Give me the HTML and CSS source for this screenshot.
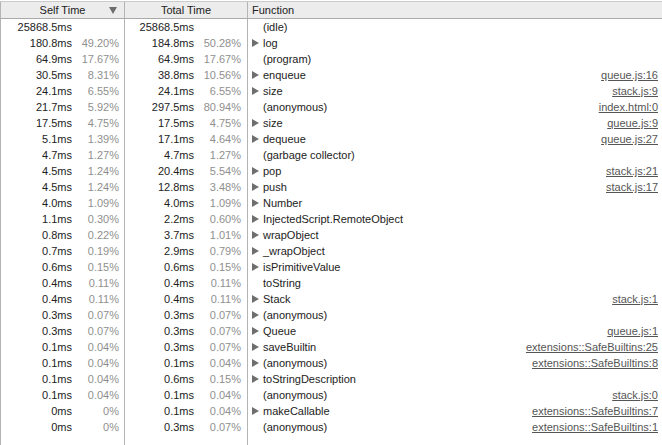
FILE: index.html
```html
<!DOCTYPE html>
<html>
<head>
<meta charset="utf-8">
<link rel="stylesheet" href="styles.css">
</head>
<body>
<div class="grid">
  <div class="row head">
    <div class="cell hself">Self Time<svg class="sort" viewBox="0 0 8 7"><path d="M0 0H8L4 7Z"/></svg></div>
    <div class="cell htotal">Total Time</div>
    <div class="cell hfn">Function</div>
  </div>

  <div class="row"><div class="cell num">25868.5ms<span class="pct"></span></div><div class="cell num tot">25868.5ms<span class="pct"></span></div><div class="cell fn"><span class="tw"></span><span class="name">(idle)</span></div></div>
  <div class="row"><div class="cell num">180.8ms<span class="pct">49.20%</span></div><div class="cell num tot">184.8ms<span class="pct">50.28%</span></div><div class="cell fn"><span class="tw"><svg class="tri" viewBox="0 0 7 8"><path d="M0 0L7 4L0 8Z"/></svg></span><span class="name">log</span></div></div>
  <div class="row"><div class="cell num">64.9ms<span class="pct">17.67%</span></div><div class="cell num tot">64.9ms<span class="pct">17.67%</span></div><div class="cell fn"><span class="tw"></span><span class="name">(program)</span></div></div>
  <div class="row"><div class="cell num">30.5ms<span class="pct">8.31%</span></div><div class="cell num tot">38.8ms<span class="pct">10.56%</span></div><div class="cell fn"><span class="tw"><svg class="tri" viewBox="0 0 7 8"><path d="M0 0L7 4L0 8Z"/></svg></span><span class="name">enqueue</span><a class="src">queue.js:16</a></div></div>
  <div class="row"><div class="cell num">24.1ms<span class="pct">6.55%</span></div><div class="cell num tot">24.1ms<span class="pct">6.55%</span></div><div class="cell fn"><span class="tw"><svg class="tri" viewBox="0 0 7 8"><path d="M0 0L7 4L0 8Z"/></svg></span><span class="name">size</span><a class="src">stack.js:9</a></div></div>
  <div class="row"><div class="cell num">21.7ms<span class="pct">5.92%</span></div><div class="cell num tot">297.5ms<span class="pct">80.94%</span></div><div class="cell fn"><span class="tw"></span><span class="name">(anonymous)</span><a class="src">index.html:0</a></div></div>
  <div class="row"><div class="cell num">17.5ms<span class="pct">4.75%</span></div><div class="cell num tot">17.5ms<span class="pct">4.75%</span></div><div class="cell fn"><span class="tw"><svg class="tri" viewBox="0 0 7 8"><path d="M0 0L7 4L0 8Z"/></svg></span><span class="name">size</span><a class="src">queue.js:9</a></div></div>
  <div class="row"><div class="cell num">5.1ms<span class="pct">1.39%</span></div><div class="cell num tot">17.1ms<span class="pct">4.64%</span></div><div class="cell fn"><span class="tw"><svg class="tri" viewBox="0 0 7 8"><path d="M0 0L7 4L0 8Z"/></svg></span><span class="name">dequeue</span><a class="src">queue.js:27</a></div></div>
  <div class="row"><div class="cell num">4.7ms<span class="pct">1.27%</span></div><div class="cell num tot">4.7ms<span class="pct">1.27%</span></div><div class="cell fn"><span class="tw"></span><span class="name">(garbage collector)</span></div></div>
  <div class="row"><div class="cell num">4.5ms<span class="pct">1.24%</span></div><div class="cell num tot">20.4ms<span class="pct">5.54%</span></div><div class="cell fn"><span class="tw"><svg class="tri" viewBox="0 0 7 8"><path d="M0 0L7 4L0 8Z"/></svg></span><span class="name">pop</span><a class="src">stack.js:21</a></div></div>
  <div class="row"><div class="cell num">4.5ms<span class="pct">1.24%</span></div><div class="cell num tot">12.8ms<span class="pct">3.48%</span></div><div class="cell fn"><span class="tw"><svg class="tri" viewBox="0 0 7 8"><path d="M0 0L7 4L0 8Z"/></svg></span><span class="name">push</span><a class="src">stack.js:17</a></div></div>
  <div class="row"><div class="cell num">4.0ms<span class="pct">1.09%</span></div><div class="cell num tot">4.0ms<span class="pct">1.09%</span></div><div class="cell fn"><span class="tw"><svg class="tri" viewBox="0 0 7 8"><path d="M0 0L7 4L0 8Z"/></svg></span><span class="name">Number</span></div></div>
  <div class="row"><div class="cell num">1.1ms<span class="pct">0.30%</span></div><div class="cell num tot">2.2ms<span class="pct">0.60%</span></div><div class="cell fn"><span class="tw"><svg class="tri" viewBox="0 0 7 8"><path d="M0 0L7 4L0 8Z"/></svg></span><span class="name">InjectedScript.RemoteObject</span></div></div>
  <div class="row"><div class="cell num">0.8ms<span class="pct">0.22%</span></div><div class="cell num tot">3.7ms<span class="pct">1.01%</span></div><div class="cell fn"><span class="tw"><svg class="tri" viewBox="0 0 7 8"><path d="M0 0L7 4L0 8Z"/></svg></span><span class="name">wrapObject</span></div></div>
  <div class="row"><div class="cell num">0.7ms<span class="pct">0.19%</span></div><div class="cell num tot">2.9ms<span class="pct">0.79%</span></div><div class="cell fn"><span class="tw"><svg class="tri" viewBox="0 0 7 8"><path d="M0 0L7 4L0 8Z"/></svg></span><span class="name">_wrapObject</span></div></div>
  <div class="row"><div class="cell num">0.6ms<span class="pct">0.15%</span></div><div class="cell num tot">0.6ms<span class="pct">0.15%</span></div><div class="cell fn"><span class="tw"><svg class="tri" viewBox="0 0 7 8"><path d="M0 0L7 4L0 8Z"/></svg></span><span class="name">isPrimitiveValue</span></div></div>
  <div class="row"><div class="cell num">0.4ms<span class="pct">0.11%</span></div><div class="cell num tot">0.4ms<span class="pct">0.11%</span></div><div class="cell fn"><span class="tw"></span><span class="name">toString</span></div></div>
  <div class="row"><div class="cell num">0.4ms<span class="pct">0.11%</span></div><div class="cell num tot">0.4ms<span class="pct">0.11%</span></div><div class="cell fn"><span class="tw"><svg class="tri" viewBox="0 0 7 8"><path d="M0 0L7 4L0 8Z"/></svg></span><span class="name">Stack</span><a class="src">stack.js:1</a></div></div>
  <div class="row"><div class="cell num">0.3ms<span class="pct">0.07%</span></div><div class="cell num tot">0.3ms<span class="pct">0.07%</span></div><div class="cell fn"><span class="tw"><svg class="tri" viewBox="0 0 7 8"><path d="M0 0L7 4L0 8Z"/></svg></span><span class="name">(anonymous)</span></div></div>
  <div class="row"><div class="cell num">0.3ms<span class="pct">0.07%</span></div><div class="cell num tot">0.3ms<span class="pct">0.07%</span></div><div class="cell fn"><span class="tw"><svg class="tri" viewBox="0 0 7 8"><path d="M0 0L7 4L0 8Z"/></svg></span><span class="name">Queue</span><a class="src">queue.js:1</a></div></div>
  <div class="row"><div class="cell num">0.1ms<span class="pct">0.04%</span></div><div class="cell num tot">0.3ms<span class="pct">0.07%</span></div><div class="cell fn"><span class="tw"><svg class="tri" viewBox="0 0 7 8"><path d="M0 0L7 4L0 8Z"/></svg></span><span class="name">saveBuiltin</span><a class="src">extensions::SafeBuiltins:25</a></div></div>
  <div class="row"><div class="cell num">0.1ms<span class="pct">0.04%</span></div><div class="cell num tot">0.1ms<span class="pct">0.04%</span></div><div class="cell fn"><span class="tw"><svg class="tri" viewBox="0 0 7 8"><path d="M0 0L7 4L0 8Z"/></svg></span><span class="name">(anonymous)</span><a class="src">extensions::SafeBuiltins:8</a></div></div>
  <div class="row"><div class="cell num">0.1ms<span class="pct">0.04%</span></div><div class="cell num tot">0.6ms<span class="pct">0.15%</span></div><div class="cell fn"><span class="tw"><svg class="tri" viewBox="0 0 7 8"><path d="M0 0L7 4L0 8Z"/></svg></span><span class="name">toStringDescription</span></div></div>
  <div class="row"><div class="cell num">0.1ms<span class="pct">0.04%</span></div><div class="cell num tot">0.1ms<span class="pct">0.04%</span></div><div class="cell fn"><span class="tw"></span><span class="name">(anonymous)</span><a class="src">stack.js:0</a></div></div>
  <div class="row"><div class="cell num">0ms<span class="pct">0%</span></div><div class="cell num tot">0.1ms<span class="pct">0.04%</span></div><div class="cell fn"><span class="tw"><svg class="tri" viewBox="0 0 7 8"><path d="M0 0L7 4L0 8Z"/></svg></span><span class="name">makeCallable</span><a class="src">extensions::SafeBuiltins:7</a></div></div>
  <div class="row"><div class="cell num">0ms<span class="pct">0%</span></div><div class="cell num tot">0.3ms<span class="pct">0.07%</span></div><div class="cell fn"><span class="tw"></span><span class="name">(anonymous)</span><a class="src">extensions::SafeBuiltins:1</a></div></div>

  <div class="row filler"><div class="cell"></div><div class="cell"></div><div class="cell"></div></div>
</div>
</body>
</html>
```

FILE: styles.css
```css
html, body {
  margin: 0;
  padding: 0;
  background: #ffffff;
}
body {
  font-family: "Liberation Sans", Arial, sans-serif;
  font-size: 11px;
  color: #222222;
  width: 662px;
  height: 445px;
  overflow: hidden;
}
.grid {
  display: flex;
  flex-direction: column;
  height: 445px;
  padding-top: 1px;
  box-sizing: border-box;
}
.row {
  display: grid;
  grid-template-columns: 124px 123px 1fr;
  height: 16px;
  line-height: 16px;
  flex: none;
}
.cell {
  border-left: 1px solid #b4b4b4;
  white-space: nowrap;
  overflow: hidden;
  min-width: 0;
}
.head {
  height: 16px;
  background: #ececec;
  border-top: 1px solid #cbcbcb;
  border-bottom: 1px solid #a9a9a9;
}
.head .cell {
  border-left-color: #b4b4b4;
}
.hself {
  position: relative;
  text-align: center;
}
.htotal {
  text-align: center;
}
.hfn {
  padding-left: 4px;
}
.sort {
  position: absolute;
  right: 7px;
  top: 5px;
  width: 8px;
  height: 7px;
  fill: #6d6d6d;
}
.num {
  text-align: right;
  padding-right: 5px;
}
.tot {
  padding-right: 6px;
}
.pct {
  display: inline-block;
  width: 47px;
  text-align: right;
  color: #8f8f8f;
}
.fn {
  display: flex;
  align-items: center;
  padding-left: 4px;
  padding-right: 4px;
}
.tw {
  width: 11px;
  flex: none;
  display: flex;
  align-items: center;
}
.tri {
  width: 7px;
  height: 8px;
  fill: #6e6e6e;
}
.name {
  flex: 1;
}
.src {
  color: #555555;
  text-decoration: underline;
}
.filler {
  flex: 1;
  height: auto;
}
```
